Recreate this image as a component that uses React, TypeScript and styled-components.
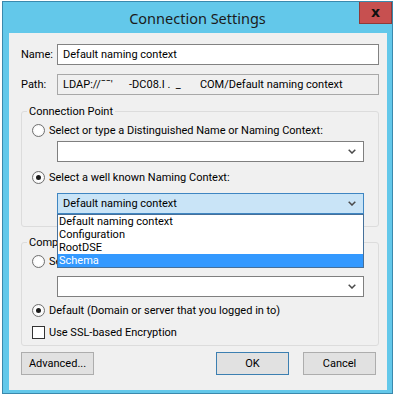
import React from "react";
import styled, { createGlobalStyle } from "styled-components";

const GlobalStyle = createGlobalStyle`
  html, body { margin: 0; padding: 0; background: #ffffff; }
  body {
    font-family: Roboto, "Noto Sans", sans-serif;
    font-size: 11px;
    color: #000000;
  }
  * { box-sizing: border-box; }
`;

const Window = styled.div`
  margin: 1px 0 0 2px;
  width: 391px;
  height: 393px;
  border: 1px solid #3a89ad;
  background: #63c8ea;
  display: flex;
  flex-direction: column;
`;

const TitleBar = styled.div`
  height: 31px;
  flex: none;
  display: grid;
  grid-template-columns: 1fr auto 1fr;
  align-items: center;
`;

const Title = styled.div`
  grid-column: 2;
  font-family: "Noto Sans", sans-serif;
  font-size: 14.5px;
  color: #1b1b1b;
  padding-top: 1px;
`;

const CloseButton = styled.div`
  grid-column: 3;
  justify-self: end;
  align-self: start;
  width: 33px;
  height: 22px;
  margin-right: 0;
  background: #c75050;
  border: 1px solid #8f3a38;
  border-top: none;
  display: flex;
  align-items: center;
  justify-content: center;
  font-family: "DejaVu Sans", sans-serif;
  font-weight: bold;
  font-size: 14px;
  color: #111;
  line-height: 1;
  padding-bottom: 2px;
`;

const Client = styled.div`
  flex: 1;
  margin: 0 5px 3px 6px;
  background: #f0f0f0;
  padding: 11px 8px 0 12px;
  display: flex;
  flex-direction: column;
`;

const FieldRow = styled.div<{ $gap?: number }>`
  display: flex;
  align-items: center;
  height: 21px;
  margin-top: ${(p) => p.$gap ?? 0}px;
`;

const FieldLabel = styled.div`
  width: 36px;
  flex: none;
`;

const TextBox = styled.div<{ $readonly?: boolean }>`
  flex: 1;
  height: 21px;
  border: 1px solid ${(p) => (p.$readonly ? "#a8a8a8" : "#828282")};
  background: ${(p) => (p.$readonly ? "#f0f0f0" : "#ffffff")};
  padding: 0 5px;
  display: flex;
  align-items: center;
  white-space: pre;
`;

const GroupBox = styled.div<{ $gap: number; $pb: number }>`
  position: relative;
  margin-top: ${(p) => p.$gap}px;
  border: 1px solid #dcdcdc;
  border-radius: 3px;
  padding: 10px 0 ${(p) => p.$pb}px 10px;
  display: flex;
  flex-direction: column;
`;

const GroupTitle = styled.div<{ $clip?: number }>`
  position: absolute;
  top: -8px;
  left: 5px;
  padding: 0 2px;
  line-height: 15px;
  background: #f0f0f0;
  white-space: nowrap;
  overflow: hidden;
  ${(p) => (p.$clip ? `max-width: ${p.$clip}px;` : "")}
`;

const OptionRow = styled.div<{ $gap?: number }>`
  display: flex;
  align-items: center;
  gap: 4px;
  height: 16px;
  margin-top: ${(p) => p.$gap ?? 0}px;
  white-space: nowrap;
`;

const OptionText = styled.span<{ $clip?: number }>`
  overflow: hidden;
  ${(p) => (p.$clip ? `max-width: ${p.$clip}px;` : "")}
`;

const Radio = styled.span<{ $checked?: boolean }>`
  width: 13px;
  height: 13px;
  flex: none;
  border-radius: 50%;
  border: 1px solid #6f6f6f;
  background: radial-gradient(circle at 50% 50%, #ffffff 40%, #ececec 100%);
  display: flex;
  align-items: center;
  justify-content: center;
  &::after {
    content: "";
    width: 5px;
    height: 5px;
    border-radius: 50%;
    background: ${(p) => (p.$checked ? "#1c1c1c" : "transparent")};
  }
`;

const Checkbox = styled.span`
  width: 13px;
  height: 13px;
  flex: none;
  border: 1px solid #333333;
  background: #ffffff;
`;

const ComboWrap = styled.div<{ $gap: number }>`
  position: relative;
  width: 307px;
  margin-left: 25px;
  margin-top: ${(p) => p.$gap}px;
`;

const Combo = styled.div<{ $focused?: boolean }>`
  height: 21px;
  border: 1px solid ${(p) => (p.$focused ? "#3f86c2" : "#7f7f7f")};
  background: ${(p) => (p.$focused ? "#c9e4f7" : "#ffffff")};
  display: flex;
  align-items: center;
  padding: 0 5px;
`;

const ComboText = styled.div`
  flex: 1;
`;

const Chevron = () => (
  <svg width="8" height="5" viewBox="0 0 8 5" style={{ marginRight: 2 }}>
    <polyline points="0.7,0.7 4,4 7.3,0.7" fill="none" stroke="#4a4a4a" strokeWidth="1.5" />
  </svg>
);

const DropList = styled.div`
  position: absolute;
  top: 100%;
  left: 0;
  width: 307px;
  z-index: 5;
  background: #ffffff;
  border: 1px solid #46709a;
  display: flex;
  flex-direction: column;
`;

const DropItem = styled.div<{ $selected?: boolean }>`
  height: 13px;
  line-height: 13px;
  padding-left: 1px;
  background: ${(p) => (p.$selected ? "#3399ff" : "transparent")};
  color: ${(p) => (p.$selected ? "#ffffff" : "#000000")};
`;

const ButtonRow = styled.div`
  display: flex;
  margin-top: 6px;
  padding-right: 3px;
`;

const Button = styled.div<{ $default?: boolean }>`
  width: 73px;
  height: 23px;
  border: 1px solid ${(p) => (p.$default ? "#3c7fb1" : "#adadad")};
  background: #e1e1e1;
  display: flex;
  align-items: center;
  justify-content: center;
`;

const Spacer = styled.div`
  flex: 1;
`;

const ButtonGap = styled.div`
  width: 14px;
`;

export default function App() {
  return (
    <>
      <GlobalStyle />
      <Window>
        <TitleBar>
          <Title>Connection Settings</Title>
          <CloseButton>x</CloseButton>
        </TitleBar>
        <Client>
          <FieldRow>
            <FieldLabel>Name:</FieldLabel>
            <TextBox>Default naming context</TextBox>
          </FieldRow>
          <FieldRow $gap={9}>
            <FieldLabel>Path:</FieldLabel>
            <TextBox $readonly>{"LDAP://¯¯'      -DC08.I .  _       COM/Default naming context"}</TextBox>
          </FieldRow>

          <GroupBox $gap={16} $pb={12}>
            <GroupTitle>Connection Point</GroupTitle>
            <OptionRow>
              <Radio />
              <OptionText>Select or type a Distinguished Name or Naming Context:</OptionText>
            </OptionRow>
            <ComboWrap $gap={3}>
              <Combo>
                <ComboText />
                <Chevron />
              </Combo>
            </ComboWrap>
            <OptionRow $gap={7}>
              <Radio $checked />
              <OptionText>Select a well known Naming Context:</OptionText>
            </OptionRow>
            <ComboWrap $gap={8}>
              <Combo $focused>
                <ComboText>Default naming context</ComboText>
                <Chevron />
              </Combo>
              <DropList>
                <DropItem>Default naming context</DropItem>
                <DropItem>Configuration</DropItem>
                <DropItem>RootDSE</DropItem>
                <DropItem $selected>Schema</DropItem>
              </DropList>
            </ComboWrap>
          </GroupBox>

          <GroupBox $gap={15} $pb={5}>
            <GroupTitle $clip={30}>Computer</GroupTitle>
            <OptionRow>
              <Radio />
              <OptionText $clip={9}>Select or type a domain or server:</OptionText>
            </OptionRow>
            <ComboWrap $gap={7}>
              <Combo>
                <ComboText />
                <Chevron />
              </Combo>
            </ComboWrap>
            <OptionRow $gap={5}>
              <Radio $checked />
              <OptionText>Default (Domain or server that you logged in to)</OptionText>
            </OptionRow>
            <OptionRow $gap={6}>
              <Checkbox />
              <OptionText>Use SSL-based Encryption</OptionText>
            </OptionRow>
          </GroupBox>

          <ButtonRow>
            <Button>Advanced...</Button>
            <Spacer />
            <Button $default>OK</Button>
            <ButtonGap />
            <Button>Cancel</Button>
          </ButtonRow>
        </Client>
      </Window>
    </>
  );
}
